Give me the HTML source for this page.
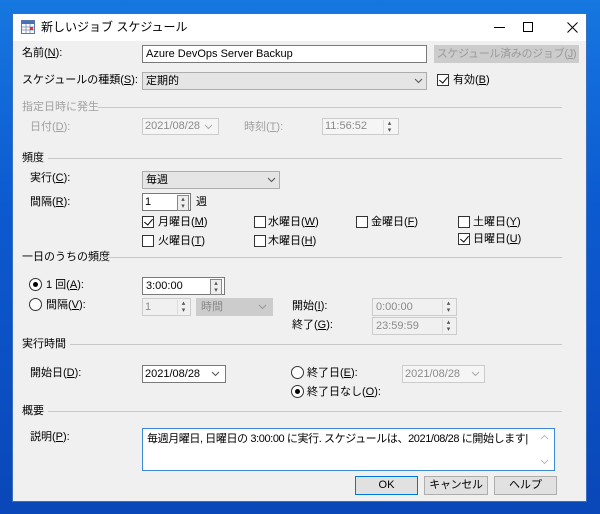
<!DOCTYPE html>
<html><head><meta charset="utf-8"><style>
*{margin:0;padding:0;box-sizing:border-box}
body{width:600px;height:514px;overflow:hidden;background:linear-gradient(180deg,#1677e0 0%,#0c5ad0 40%,#0a47b8 100%);font-family:"Liberation Sans","Noto Sans CJK JP",sans-serif;font-size:11px;color:#000;position:relative}
div{white-space:nowrap}
.win{position:absolute;left:12px;top:13px;width:575px;height:489px;background:#f0f0f0;border:1px solid #3a6fc0}
.tb{position:absolute;left:0;top:0;width:100%;height:27px;background:#fff}
.a{position:absolute;line-height:14px}
.g{color:#a0a0a0}
.box{position:absolute;background:#fff;border:1px solid #7a7a7a}
.dis{position:absolute;background:#f0f0f0;border:1px solid #ccc;color:#8a8a8a}
.cmb{position:absolute;background:#e5e5e5;border:1px solid #adadad}
.line{position:absolute;height:1px;background:#c8c8c8}
.cb{position:absolute;width:12px;height:12px;border:1px solid #333;background:#fff}
.rd{position:absolute;width:13px;height:13px;border:1px solid #333;border-radius:50%;background:#fff}
.rd.on::after{content:"";position:absolute;left:3px;top:3px;width:5px;height:5px;border-radius:50%;background:#000}
.chk::after{content:"";position:absolute;left:3px;top:0px;width:4px;height:7px;border:solid #000;border-width:0 1.3px 1.3px 0;transform:rotate(40deg)}
.btn{position:absolute;background:#e1e1e1;border:1px solid #adadad;text-align:center;line-height:16px}
.v{position:absolute;width:9px;height:6px}
.sp{position:absolute;width:12px;border-left:1px solid #ddd;font-size:7px;line-height:7px;text-align:center;color:#555}
</style></head><body>
<svg width="0" height="0" style="position:absolute"><defs><symbol id="dn" viewBox="0 0 9 6"><polyline points="1,1 4.5,4.5 8,1" fill="none" stroke="currentColor" stroke-width="1"/></symbol><symbol id="up" viewBox="0 0 9 6"><polyline points="1,5 4.5,1.5 8,5" fill="none" stroke="currentColor" stroke-width="1"/></symbol></defs></svg>
<div class="win">
 <div class="tb">
  <svg style="position:absolute;left:8px;top:6px" width="14" height="14"><rect x="0.5" y="0.5" width="13" height="13" fill="#fff" stroke="#5a78b0"/><rect x="1" y="1" width="12" height="3" fill="#4a6fb8"/><g stroke="#8aa0c8"><line x1="1" y1="7" x2="13" y2="7"/><line x1="1" y1="10" x2="13" y2="10"/><line x1="5" y1="4" x2="5" y2="13"/><line x1="9" y1="4" x2="9" y2="13"/></g><rect x="9" y="7" width="3" height="3" fill="#d33"/></svg>
  <div class="a" style="left:28px;top:6px;font-size:12px">新しいジョブ スケジュール</div>
  <svg style="position:absolute;left:481px;top:13px" width="11" height="2"><line x1="0" y1="0.5" x2="11" y2="0.5" stroke="#000"/></svg>
  <div style="position:absolute;left:510px;top:8px;width:10px;height:10px;border:1px solid #000"></div>
  <svg style="position:absolute;left:554px;top:8px" width="11" height="11"><path d="M0.5 0.5L10.5 10.5M10.5 0.5L0.5 10.5" stroke="#000" stroke-width="1"/></svg>
 </div>
</div>
<div class="a" style="left:22px;top:46px">名前(<u>N</u>):</div>
<div class="box" style="left:142px;top:45px;width:285px;height:18px;padding-left:3px;line-height:16px">Azure DevOps Server Backup</div>
<div class="btn" style="left:434px;top:45px;width:145px;height:18px;background:#ccc;border-color:#ccc;color:#9a9a9a;letter-spacing:-0.3px">スケジュール済みのジョブ(<u>J</u>)</div>
<div class="a" style="left:22px;top:73px">スケジュールの種類(<u>S</u>):</div>
<div class="cmb" style="left:142px;top:72px;width:285px;height:18px;padding-left:3px;line-height:16px">定期的</div>
<svg class="v" style="left:414px;top:78px;color:#555"><use href="#dn"/></svg>
<div class="cb chk" style="left:437px;top:74px"></div>
<div class="a" style="left:453px;top:73px">有効(<u>B</u>)</div>

<div class="a g" style="left:22px;top:100px">指定日時に発生</div>
<div class="line" style="left:98px;top:107px;width:464px"></div>
<div class="a g" style="left:30px;top:120px">日付(<u>D</u>):</div>
<div class="dis" style="left:142px;top:118px;width:77px;height:17px;background:#f5f5f5;padding-left:2px;line-height:15px">2021/08/28</div>
<svg class="v" style="left:204px;top:124px;color:#aaa"><use href="#dn"/></svg>
<div class="a g" style="left:244px;top:120px">時刻(<u>T</u>):</div>
<div class="dis" style="left:322px;top:118px;width:77px;height:17px;background:#f5f5f5;padding-left:2px;line-height:15px">11:56:52</div>
<div class="sp" style="left:383px;top:120px">▴<br>▾</div>

<div class="a" style="left:22px;top:151px">頻度</div>
<div class="line" style="left:48px;top:158px;width:514px"></div>
<div class="a" style="left:30px;top:171px">実行(<u>C</u>):</div>
<div class="cmb" style="left:142px;top:171px;width:138px;height:18px;padding-left:3px;line-height:16px">毎週</div>
<svg class="v" style="left:267px;top:177px;color:#555"><use href="#dn"/></svg>
<div class="a" style="left:30px;top:195px">間隔(<u>R</u>):</div>
<div class="box" style="left:142px;top:193px;width:49px;height:18px;padding-left:2px;line-height:16px">1</div>
<div class="sp" style="left:177px;top:195px;border:1px solid #888;background:#eee">▴<br>▾</div>
<div class="a" style="left:196px;top:195px">週</div>

<div class="cb chk" style="left:142px;top:216px"></div><div class="a" style="left:158px;top:215px">月曜日(<u>M</u>)</div>
<div class="cb" style="left:254px;top:216px"></div><div class="a" style="left:268px;top:215px">水曜日(<u>W</u>)</div>
<div class="cb" style="left:356px;top:216px"></div><div class="a" style="left:371px;top:215px">金曜日(<u>F</u>)</div>
<div class="cb" style="left:458px;top:216px"></div><div class="a" style="left:473px;top:215px">土曜日(<u>Y</u>)</div>
<div class="cb" style="left:142px;top:235px"></div><div class="a" style="left:158px;top:234px">火曜日(<u>T</u>)</div>
<div class="cb" style="left:254px;top:235px"></div><div class="a" style="left:268px;top:234px">木曜日(<u>H</u>)</div>
<div class="cb chk" style="left:458px;top:233px"></div><div class="a" style="left:473px;top:232px">日曜日(<u>U</u>)</div>

<div class="a" style="left:22px;top:250px">一日のうちの頻度</div>
<div class="line" style="left:100px;top:257px;width:462px"></div>
<div class="rd on" style="left:29px;top:278px"></div>
<div class="a" style="left:46px;top:278px">1 回(<u>A</u>):</div>
<div class="box" style="left:142px;top:277px;width:83px;height:18px;padding-left:3px;line-height:16px">3:00:00</div>
<div class="sp" style="left:210px;top:279px;border:1px solid #888;background:#eee">▴<br>▾</div>
<div class="rd" style="left:29px;top:298px"></div>
<div class="a" style="left:46px;top:298px">間隔(<u>V</u>):</div>
<div class="dis" style="left:142px;top:298px;width:49px;height:18px;padding-left:2px;line-height:16px">1</div>
<div class="sp" style="left:177px;top:300px">▴<br>▾</div>
<div class="dis" style="left:196px;top:298px;width:77px;height:18px;background:#ccc;border-color:#ccc;padding-left:4px;line-height:16px;color:#8a8a8a">時間</div>
<svg class="v" style="left:258px;top:304px;color:#999"><use href="#dn"/></svg>
<div class="a" style="left:292px;top:299px">開始(<u>I</u>):</div>
<div class="dis" style="left:372px;top:298px;width:85px;height:18px;padding-left:3px;line-height:16px">0:00:00</div>
<div class="sp" style="left:442px;top:300px">▴<br>▾</div>
<div class="a" style="left:292px;top:318px">終了(<u>G</u>):</div>
<div class="dis" style="left:372px;top:317px;width:85px;height:18px;padding-left:3px;line-height:16px">23:59:59</div>
<div class="sp" style="left:442px;top:319px">▴<br>▾</div>

<div class="a" style="left:22px;top:337px">実行時間</div>
<div class="line" style="left:70px;top:344px;width:492px"></div>
<div class="a" style="left:30px;top:366px">開始日(<u>D</u>):</div>
<div class="box" style="left:142px;top:365px;width:84px;height:18px;padding-left:2px;line-height:16px">2021/08/28</div>
<svg class="v" style="left:211px;top:371px;color:#555"><use href="#dn"/></svg>
<div class="rd" style="left:291px;top:366px"></div>
<div class="a" style="left:307px;top:366px">終了日(<u>E</u>):</div>
<div class="dis" style="left:402px;top:365px;width:83px;height:18px;background:#f5f5f5;padding-left:2px;line-height:16px">2021/08/28</div>
<svg class="v" style="left:471px;top:371px;color:#aaa"><use href="#dn"/></svg>
<div class="rd on" style="left:291px;top:385px"></div>
<div class="a" style="left:307px;top:385px">終了日なし(<u>O</u>):</div>

<div class="a" style="left:22px;top:404px">概要</div>
<div class="line" style="left:48px;top:411px;width:514px"></div>
<div class="a" style="left:30px;top:430px">説明(<u>P</u>):</div>
<div class="box" style="left:142px;top:428px;width:413px;height:43px;border-color:#3c8ad6;padding:3px 0 0 4px;line-height:14px;letter-spacing:-0.4px;overflow:hidden">毎週月曜日, 日曜日の 3:00:00 に実行. スケジュールは、2021/08/28 に開始します|</div>
<svg class="v" style="left:540px;top:434px;color:#bbb"><use href="#up"/></svg>
<svg class="v" style="left:540px;top:459px;color:#bbb"><use href="#dn"/></svg>
<div class="btn" style="left:355px;top:476px;width:63px;height:19px;border:1px solid #0078d7;line-height:17px">OK</div>
<div class="btn" style="left:424px;top:476px;width:64px;height:19px;line-height:17px;letter-spacing:-0.3px">キャンセル</div>
<div class="btn" style="left:494px;top:476px;width:63px;height:19px;line-height:17px">ヘルプ</div>
</body></html>
